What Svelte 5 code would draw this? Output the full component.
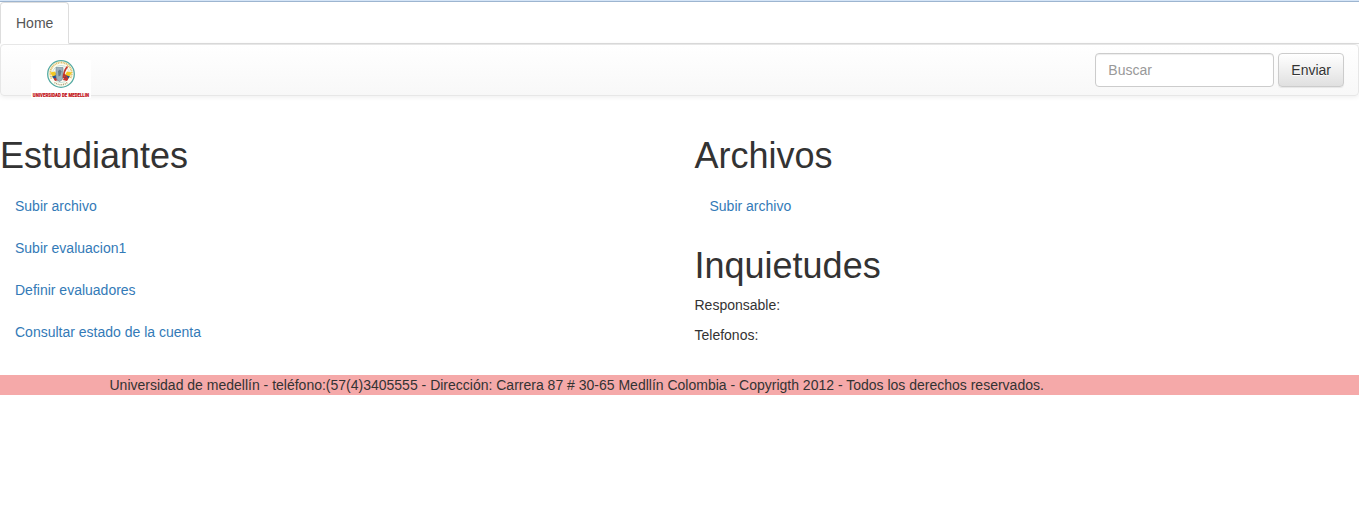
<script>
  const studentLinks = [
    'Subir archivo',
    'Subir evaluacion1',
    'Definir evaluadores',
    'Consultar estado de la cuenta'
  ];
  const fileLinks = ['Subir archivo'];
  let query = $state('');
</script>

<div class="page">
  <ul class="tabs">
    <li><a href="#home" aria-current="page">Home</a></li>
  </ul>

  <nav class="navbar">
    <a class="brand" href="#inicio" aria-label="Universidad de Medellin">
      <svg width="60" height="38" viewBox="0 0 60 38" aria-hidden="true">
        <rect width="60" height="38" fill="#fff" />
        <circle cx="30" cy="14" r="13.3" fill="#fffdf2" stroke="#54aaa3" stroke-width="1.3" />
        <path d="M20.7 18.5A10.7 10.7 0 1 1 39.3 18.5" fill="none" stroke="#dcc070" stroke-width="2" stroke-dasharray="1.1 .6" />
        <path d="M23.5 22.5A10.7 10.7 0 0 0 36.5 22.5" fill="none" stroke="#a9a27c" stroke-width="1.4" stroke-dasharray="1 .8" />
        <circle cx="30" cy="14" r="8.6" fill="#fbfaf4" stroke="#a5d0c4" stroke-width=".6" />
        <path d="M19 12.500l5-1 3.500 6-3.500 2.500z" fill="#f3c723" />
        <path d="M21 16.500l4.500-1.500 2 3-3.500 2z" fill="#244f8e" />
        <path d="M22.500 18.500l4.500-1 1 2.500-4 1z" fill="#c9342d" />
        <path d="M41 12.500l-5-1-3.500 6 3.500 2.500z" fill="#f3c723" />
        <path d="M39 16.500l-4.500-1.500-2 3 3.500 2z" fill="#244f8e" />
        <path d="M37.500 18.500l-4.500-1-1 2.500 4 1z" fill="#c9342d" />
        <path d="M25 7.500h7v9q0 4-3.500 5Q25 20.500 25 16z" fill="#9db0bb" stroke="#6f8995" stroke-width=".6" />
        <path d="M27 11l2-1.500 1.500 2-1 4-2 1z" fill="#667f8b" />
        <path d="M36.500 6.500Q32.500 11 32.500 18M32.500 13.500l4 5" fill="none" stroke="#c3352d" stroke-width="1.700" />
        <text class="wordmark" x="30" y="37" text-anchor="middle">UNIVERSIDAD DE MEDELLIN</text>
      </svg>
    </a>
    <form class="search" onsubmit={(event) => event.preventDefault()}>
      <input type="text" placeholder="Buscar" aria-label="Buscar" bind:value={query} />
      <button type="submit">Enviar</button>
    </form>
  </nav>

  <main>
    <section>
      <h1>Estudiantes</h1>
      <ul class="links">
        {#each studentLinks as label}
          <li><a href="#estudiantes">{label}</a></li>
        {/each}
      </ul>
    </section>
    <section>
      <h1>Archivos</h1>
      <ul class="links">
        {#each fileLinks as label}
          <li><a href="#archivos">{label}</a></li>
        {/each}
      </ul>
      <h1>Inquietudes</h1>
      <p>Responsable:</p>
      <p>Telefonos:</p>
    </section>
  </main>

  <footer>
    <div class="container">
      Universidad de medellín - teléfono:(57(4)3405555 - Dirección: Carrera 87 # 30-65 Medllín Colombia - Copyrigth 2012 - Todos los derechos reservados.
    </div>
  </footer>
</div>

<style>
  :global(body) {
    background: #fff;
  }

  .page,
  .page * {
    box-sizing: border-box;
  }

  .page {
    border-top: 1px solid #d5e5f7;
    color: #333;
    font-family: 'Liberation Sans', Arial, sans-serif;
    font-size: 14px;
    line-height: 20px;
  }

  ul {
    margin: 0;
    padding: 0;
    list-style: none;
  }

  a {
    color: #337ab7;
    text-decoration: none;
  }

  .tabs {
    display: flex;
    border-top: 1px solid #9db5d0;
    border-bottom: 1px solid #ddd;
  }

  .tabs li {
    margin-bottom: -1px;
  }

  .tabs a {
    display: block;
    padding: 10px 15px;
    border: 1px solid #ddd;
    border-bottom-color: #fff;
    border-radius: 4px 4px 0 0;
    background: #fff;
    color: #555;
  }

  .navbar {
    display: flex;
    justify-content: space-between;
    height: 52px;
    margin-bottom: 20px;
    padding: 0 14px 0 30px;
    border: 1px solid #e7e7e7;
    border-radius: 4px;
    background: linear-gradient(#fff, #f8f8f8);
    box-shadow: inset 0 1px 0 rgba(255, 255, 255, 0.15), 0 1px 5px rgba(0, 0, 0, 0.075);
  }

  .brand {
    height: 50px;
    padding-top: 15px;
  }

  .brand svg {
    display: block;
    overflow: visible;
  }

  .wordmark {
    fill: #c4161c;
    stroke: #c4161c;
    stroke-width: 0.2px;
    font-family: 'Roboto Condensed', 'Open Sans Condensed', 'Liberation Sans', sans-serif;
    font-size: 5px;
    font-weight: 700;
  }

  .search {
    display: flex;
    gap: 4px;
    padding: 8px 0;
  }

  input,
  button {
    height: 34px;
    padding: 6px 12px;
    border: 1px solid #ccc;
    border-radius: 4px;
    font: inherit;
  }

  input {
    width: 179px;
    background: #fff;
    color: #555;
    box-shadow: inset 0 1px 1px rgba(0, 0, 0, 0.075);
  }

  input::placeholder {
    color: #999;
    opacity: 1;
  }

  button {
    background: linear-gradient(#fff, #e0e0e0);
    color: #333;
    text-shadow: 0 1px 0 #fff;
    box-shadow: inset 0 1px 0 rgba(255, 255, 255, 0.15), 0 1px 1px rgba(0, 0, 0, 0.075);
    cursor: pointer;
  }

  main {
    display: grid;
    grid-template-columns: 1fr 1fr;
    column-gap: 30px;
    margin-bottom: 20px;
  }

  h1 {
    margin: 20px 0 10px;
    font-size: 36px;
    font-weight: 500;
    line-height: 1.1;
  }

  .links {
    display: grid;
    gap: 2px;
  }

  .links a {
    display: block;
    padding: 10px 15px;
  }

  p {
    margin: 0 0 10px;
  }

  footer {
    background: #f5a9a9;
  }

  .container {
    max-width: 1170px;
    margin: 0 auto;
    padding: 0 15px;
  }
</style>
